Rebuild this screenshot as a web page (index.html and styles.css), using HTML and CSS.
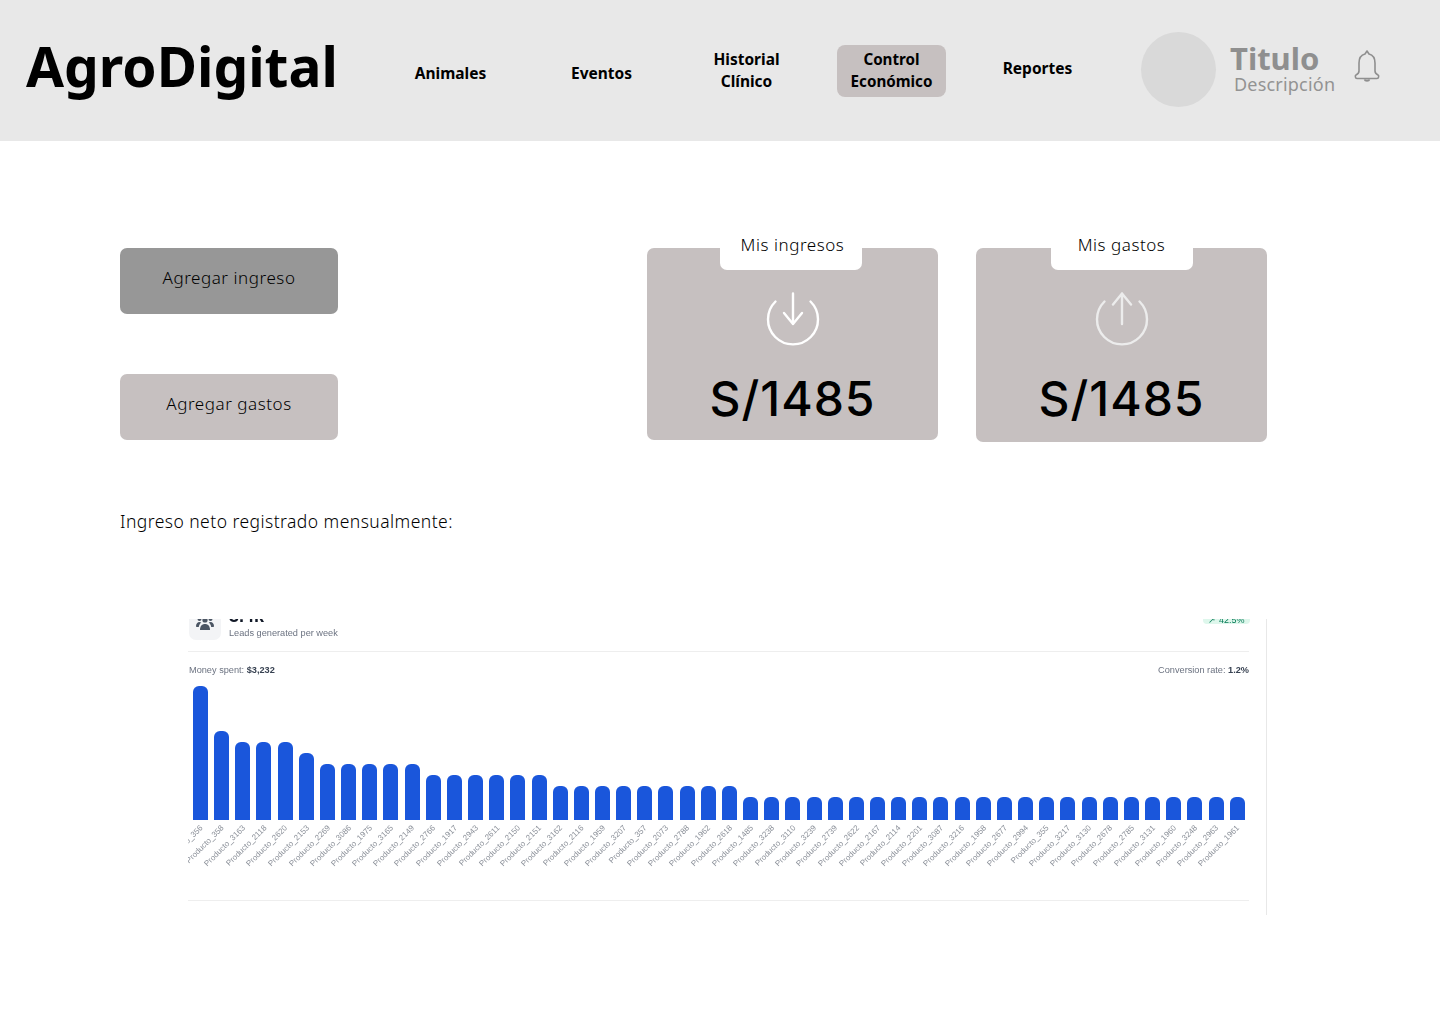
FILE: index.html
```html
<!DOCTYPE html>
<html lang="es">
<head>
    <meta charset="UTF-8">
    <title>AgroDigital - Control Económico</title>
    <link rel="stylesheet" href="styles.css">
</head>
<body>
    <header class="topbar">
        <div class="logo">AgroDigital</div>
        <nav class="nav">
            <a class="nav-item low">Animales</a>
            <a class="nav-item low nudge-eventos">Eventos</a>
            <a class="nav-item">Historial<br>Clínico</a>
            <a class="nav-item active">Control<br>Económico</a>
            <a class="nav-item nudge-reportes">Reportes</a>
        </nav>
        <div class="avatar"></div>
        <div class="profile">
            <div class="profile-title">Titulo</div>
            <div class="profile-desc">Descripción</div>
        </div>
        <svg class="bell" width="28" height="34" viewBox="0 0 28 34" fill="none" stroke="#8f8f8f" stroke-width="1.6" stroke-linejoin="round">
            <path d="M14 2l2 3c4 1 6 4.500 6 9v8c0 1.500 1 3 3 4 1 .5 1 3.500-1 3.500H4c-2 0-2-3-1-3.500 2-1 3-2.500 3-4v-8c0-4.500 2-8 6-9z"/>
            <path d="M11.500 30.500c.5 2 4.500 2 5 0" fill="#8f8f8f"/>
        </svg>
    </header>

    <main class="content">
        <section class="top-row">
            <div class="actions">
                <button class="btn btn-dark">Agregar ingreso</button>
                <button class="btn">Agregar gastos</button>
            </div>
            <div class="cards">
                <div class="card">
                    <div class="card-tab tab-left">Mis ingresos</div>
                    <svg class="card-icon" width="54" height="54" viewBox="0 0 54 54" fill="none" stroke="#fff" stroke-width="2.400" stroke-linecap="round" stroke-linejoin="round">
                        <path d="M9.500 9.500a25 25 0 1 0 35 0"/>
                        <path d="M27 1.500V32M18 21l9 11 9-11"/>
                    </svg>
                    <div class="amount">S/1485</div>
                </div>
                <div class="card card-tall">
                    <div class="card-tab">Mis gastos</div>
                    <svg class="card-icon" width="54" height="54" viewBox="0 0 54 54" fill="none" stroke="#ececec" stroke-width="2.400" stroke-linecap="round" stroke-linejoin="round">
                        <path d="M9.500 9.500a25 25 0 1 0 35 0"/>
                        <path d="M27 32V1.500M18 12.500l9-11 9 11"/>
                    </svg>
                    <div class="amount">S/1485</div>
                </div>
            </div>
        </section>

        <p class="net-label">Ingreso neto registrado mensualmente:</p>

        <section class="chart-crop">
            <div class="chart">
                <div class="chart-head">
                    <div class="leads-icon">
                        <svg width="18" height="16" viewBox="0 0 18 16" fill="#4b5563">
                            <circle cx="9" cy="4" r="2.600"/>
                            <circle cx="3.500" cy="3" r="2"/>
                            <circle cx="14.500" cy="3" r="2"/>
                            <path d="M4 14c0-4 2-6 5-6s5 2 5 6z"/>
                            <path d="M0 10c0-2 1.500-4 3.500-4 .8 0 1.300.3 1.800.6C3.600 8 3 9.500 2.800 11H1c-.6 0-1-.4-1-1zM18 10c0-2-1.500-4-3.500-4-.8 0-1.300.3-1.800.6 1.700 1.400 2.300 2.900 2.500 4.400H17c.6 0 1-.4 1-1z"/>
                        </svg>
                    </div>
                    <div class="leads-text">
                        <div class="leads-num">3.4k</div>
                        <div class="leads-sub">Leads generated per week</div>
                    </div>
                    <div class="growth">↗ 42.5%</div>
                </div>
                <div class="chart-stats">
                    <span>Money spent: <b>$3,232</b></span>
                    <span>Conversion rate: <b>1.2%</b></span>
                </div>
                <div class="plot">
                    <div class="col"><div class="bar" style="height:134px"></div><div class="tick"><span>Producto_356</span></div></div>
                    <div class="col"><div class="bar" style="height:89px"></div><div class="tick"><span>Producto_358</span></div></div>
                    <div class="col"><div class="bar" style="height:78px"></div><div class="tick"><span>Producto_3163</span></div></div>
                    <div class="col"><div class="bar" style="height:78px"></div><div class="tick"><span>Producto_2118</span></div></div>
                    <div class="col"><div class="bar" style="height:78px"></div><div class="tick"><span>Producto_2620</span></div></div>
                    <div class="col"><div class="bar" style="height:67px"></div><div class="tick"><span>Producto_2153</span></div></div>
                    <div class="col"><div class="bar" style="height:56px"></div><div class="tick"><span>Producto_2269</span></div></div>
                    <div class="col"><div class="bar" style="height:56px"></div><div class="tick"><span>Producto_3086</span></div></div>
                    <div class="col"><div class="bar" style="height:56px"></div><div class="tick"><span>Producto_1975</span></div></div>
                    <div class="col"><div class="bar" style="height:56px"></div><div class="tick"><span>Producto_3165</span></div></div>
                    <div class="col"><div class="bar" style="height:56px"></div><div class="tick"><span>Producto_2149</span></div></div>
                    <div class="col"><div class="bar" style="height:45px"></div><div class="tick"><span>Producto_2766</span></div></div>
                    <div class="col"><div class="bar" style="height:45px"></div><div class="tick"><span>Producto_1917</span></div></div>
                    <div class="col"><div class="bar" style="height:45px"></div><div class="tick"><span>Producto_2943</span></div></div>
                    <div class="col"><div class="bar" style="height:45px"></div><div class="tick"><span>Producto_2611</span></div></div>
                    <div class="col"><div class="bar" style="height:45px"></div><div class="tick"><span>Producto_2150</span></div></div>
                    <div class="col"><div class="bar" style="height:45px"></div><div class="tick"><span>Producto_2151</span></div></div>
                    <div class="col"><div class="bar" style="height:34px"></div><div class="tick"><span>Producto_3162</span></div></div>
                    <div class="col"><div class="bar" style="height:34px"></div><div class="tick"><span>Producto_2116</span></div></div>
                    <div class="col"><div class="bar" style="height:34px"></div><div class="tick"><span>Producto_1959</span></div></div>
                    <div class="col"><div class="bar" style="height:34px"></div><div class="tick"><span>Producto_3207</span></div></div>
                    <div class="col"><div class="bar" style="height:34px"></div><div class="tick"><span>Producto_357</span></div></div>
                    <div class="col"><div class="bar" style="height:34px"></div><div class="tick"><span>Producto_2073</span></div></div>
                    <div class="col"><div class="bar" style="height:34px"></div><div class="tick"><span>Producto_2788</span></div></div>
                    <div class="col"><div class="bar" style="height:34px"></div><div class="tick"><span>Producto_1962</span></div></div>
                    <div class="col"><div class="bar" style="height:34px"></div><div class="tick"><span>Producto_2618</span></div></div>
                    <div class="col"><div class="bar" style="height:23px"></div><div class="tick"><span>Producto_1485</span></div></div>
                    <div class="col"><div class="bar" style="height:23px"></div><div class="tick"><span>Producto_3238</span></div></div>
                    <div class="col"><div class="bar" style="height:23px"></div><div class="tick"><span>Producto_3110</span></div></div>
                    <div class="col"><div class="bar" style="height:23px"></div><div class="tick"><span>Producto_3239</span></div></div>
                    <div class="col"><div class="bar" style="height:23px"></div><div class="tick"><span>Producto_2739</span></div></div>
                    <div class="col"><div class="bar" style="height:23px"></div><div class="tick"><span>Producto_2622</span></div></div>
                    <div class="col"><div class="bar" style="height:23px"></div><div class="tick"><span>Producto_2167</span></div></div>
                    <div class="col"><div class="bar" style="height:23px"></div><div class="tick"><span>Producto_2114</span></div></div>
                    <div class="col"><div class="bar" style="height:23px"></div><div class="tick"><span>Producto_2201</span></div></div>
                    <div class="col"><div class="bar" style="height:23px"></div><div class="tick"><span>Producto_3087</span></div></div>
                    <div class="col"><div class="bar" style="height:23px"></div><div class="tick"><span>Producto_3216</span></div></div>
                    <div class="col"><div class="bar" style="height:23px"></div><div class="tick"><span>Producto_1958</span></div></div>
                    <div class="col"><div class="bar" style="height:23px"></div><div class="tick"><span>Producto_2677</span></div></div>
                    <div class="col"><div class="bar" style="height:23px"></div><div class="tick"><span>Producto_2994</span></div></div>
                    <div class="col"><div class="bar" style="height:23px"></div><div class="tick"><span>Producto_355</span></div></div>
                    <div class="col"><div class="bar" style="height:23px"></div><div class="tick"><span>Producto_3217</span></div></div>
                    <div class="col"><div class="bar" style="height:23px"></div><div class="tick"><span>Producto_3130</span></div></div>
                    <div class="col"><div class="bar" style="height:23px"></div><div class="tick"><span>Producto_2678</span></div></div>
                    <div class="col"><div class="bar" style="height:23px"></div><div class="tick"><span>Producto_2785</span></div></div>
                    <div class="col"><div class="bar" style="height:23px"></div><div class="tick"><span>Producto_3131</span></div></div>
                    <div class="col"><div class="bar" style="height:23px"></div><div class="tick"><span>Producto_1960</span></div></div>
                    <div class="col"><div class="bar" style="height:23px"></div><div class="tick"><span>Producto_3248</span></div></div>
                    <div class="col"><div class="bar" style="height:23px"></div><div class="tick"><span>Producto_2963</span></div></div>
                    <div class="col"><div class="bar" style="height:23px"></div><div class="tick"><span>Producto_1961</span></div></div>
                </div>
            </div>
        </section>
    </main>
</body>
</html>
```

FILE: styles.css
```css
* {
    box-sizing: border-box;
}
body {
    margin: 0;
    background: #fff;
    color: #000;
    font-family: "Noto Sans", sans-serif;
}

/* barra superior */
.topbar {
    display: flex;
    align-items: center;
    height: 141px;
    padding-left: 26px;
    background: #e8e8e8;
}
.logo {
    width: 370px;
    font-size: 55px;
    font-weight: 700;
    line-height: 1;
    margin-top: -10px;
}
.nav {
    display: flex;
    gap: 36px;
    width: 745px;
}
.nav-item {
    display: flex;
    align-items: center;
    justify-content: center;
    width: 109px;
    height: 52px;
    padding-bottom: 2px;
    border-radius: 8px;
    font-size: 15.500px;
    font-weight: 700;
    line-height: 22px;
    text-align: center;
}
.nav-item.low {
    padding: 6px 0 0;
    margin-top: 2px;
    height: 47px;
}
.nudge-eventos {
    margin-left: 6px;
}
.nudge-reportes {
    margin-left: 1px;
    padding-bottom: 5px;
}
.nav-item.active {
    background: #c6c0c0;
    font-size: 15.200px;
}
.avatar {
    flex: none;
    width: 75px;
    height: 75px;
    margin-bottom: 2px;
    border-radius: 50%;
    background: #d9d9d9;
}
.profile {
    width: 137px;
    padding-left: 14px;
    margin-top: -3px;
}
.profile-title {
    font-size: 31px;
    font-weight: 700;
    line-height: 30px;
    color: #8f8f8f;
}
.profile-desc {
    padding-left: 4px;
    font-size: 18px;
    letter-spacing: 0.2px;
    line-height: 22px;
    color: #939393;
}
.bell {
    margin-top: -9px;
}

/* contenido */
.content {
    padding: 107px 173px 0 120px;
}
.top-row {
    display: flex;
    justify-content: space-between;
    align-items: flex-start;
}
.actions {
    display: flex;
    flex-direction: column;
    gap: 60px;
}
.btn {
    width: 218px;
    height: 66px;
    padding: 0 0 8px;
    border: none;
    border-radius: 7px;
    background: #c6c0c0;
    color: #000;
    font-family: "Noto Sans", sans-serif;
    font-size: 17px;
    font-weight: 300;
    letter-spacing: 0.55px;
}
.btn-dark {
    background: #979797;
}
.cards {
    display: flex;
    align-items: flex-start;
    gap: 38px;
}
.card {
    display: flex;
    flex-direction: column;
    align-items: center;
    width: 291px;
    height: 192px;
    border-radius: 7px;
    background: #c6c0c0;
}
.card-tall {
    height: 194px;
}
.card-tab {
    width: 142px;
    height: 36px;
    margin-top: -14px;
    padding-bottom: 2px;
    border-radius: 0 0 7px 7px;
    background: #fff;
    font-size: 17px;
    font-weight: 300;
    letter-spacing: 0.55px;
    line-height: 22px;
    text-align: center;
}
.tab-left {
    margin-right: 3px;
    padding-left: 3px;
}
.card-icon {
    margin-top: 22px;
}
.amount {
    margin-top: 23px;
    font-family: Inter, sans-serif;
    font-size: 48px;
    font-weight: 500;
    letter-spacing: 1px;
    line-height: 60px;
}

.net-label {
    margin: 67px 0 0;
    font-size: 17.500px;
    font-weight: 300;
    letter-spacing: 0.45px;
    line-height: 24px;
}

/* grafico recortado */
.chart-crop {
    width: 1079px;
    height: 296px;
    margin: 86px 0 0 68px;
    overflow: hidden;
    border-right: 1px solid #e8e8e8;
}
.chart {
    width: 1061px;
    margin-top: -10px;
    filter: blur(0.5px);
    font-family: "Liberation Sans", sans-serif;
    color: #6b7280;
}
.chart-head {
    display: flex;
    align-items: flex-end;
    height: 43px;
    padding: 0 0 11px 1px;
    border-bottom: 1px solid #eee;
}
.leads-icon {
    display: flex;
    align-items: center;
    justify-content: center;
    width: 32px;
    height: 32px;
    border-radius: 7px;
    background: #f3f4f6;
}
.leads-text {
    flex: 1;
    margin-left: 8px;
}
.leads-num {
    font-size: 18px;
    font-weight: 700;
    line-height: 21px;
    color: #111827;
}
.leads-sub {
    font-size: 9.200px;
    line-height: 13px;
}
.growth {
    align-self: flex-start;
    width: 47px;
    height: 15px;
    margin-right: -1px;
    border-radius: 4px;
    background: #def7ec;
    color: #057a55;
    font-size: 9px;
    line-height: 22px;
    text-align: center;
    overflow: hidden;
}
.chart-stats {
    display: flex;
    justify-content: space-between;
    height: 34px;
    padding: 12px 0 0 1px;
    font-size: 9.200px;
    line-height: 12px;
}
.chart-stats b {
    color: #374151;
}
.plot {
    display: flex;
    align-items: flex-end;
    gap: 6.170px;
    height: 215px;
    padding-left: 5px;
    border-bottom: 1px solid #eee;
}
.col {
    flex: none;
    width: 15px;
}
.bar {
    border-radius: 6px 6px 0 0;
    background: #1a56db;
}
.tick {
    display: flex;
    justify-content: flex-end;
    height: 80px;
    padding-top: 2px;
}
.tick span {
    flex: none;
    height: 10px;
    margin-right: 6px;
    font-size: 8px;
    line-height: 10px;
    color: #8b9099;
    white-space: nowrap;
    transform-origin: right center;
    transform: rotate(-45deg);
}
```
